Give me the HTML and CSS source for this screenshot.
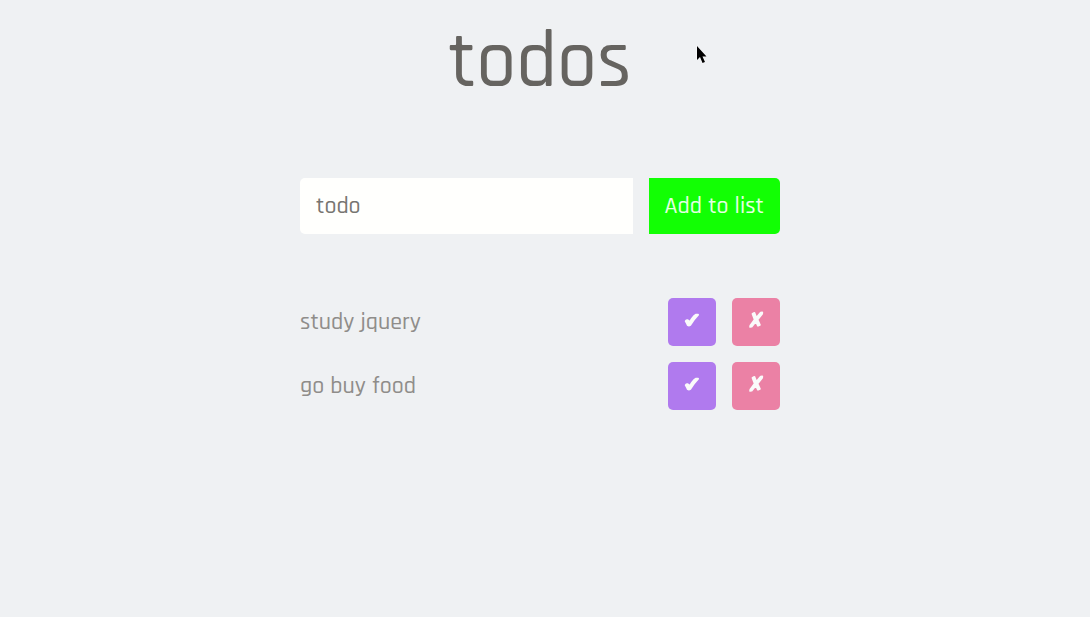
FILE: index.html
```html
<!DOCTYPE html>
<html lang="en">
<head>
<meta charset="utf-8">
<meta name="viewport" content="width=device-width, initial-scale=1">
<title>todos</title>
<link rel="stylesheet" href="styles.css">
</head>
<body>
<main class="app">
  <h1 class="title">todos</h1>
  <form class="entry">
    <input class="entry-input" type="text" placeholder="todo" aria-label="todo">
    <button class="entry-add" type="button">Add to list</button>
  </form>
  <ul class="list">
    <li class="item">
      <span class="item-text">study jquery</span>
      <button class="action done" type="button" aria-label="Complete study jquery"><svg class="icon" viewBox="0 0 24 24" aria-hidden="true"><path d="M5.8 13.2Q6.3 11.9 7.5 12.3Q8.8 12.8 9.6 14.6Q12.5 8.8 15.8 6.8H18Q14 10.8 10.2 17Q9 17.8 7.8 17.2Q6.9 15 5.8 13.2Z"/></svg></button>
      <button class="action remove" type="button" aria-label="Remove study jquery"><svg class="icon" viewBox="0 0 24 24" aria-hidden="true"><path d="M8.6 5.8L10.4 5L12.4 10L16.6 4.8L18.2 4.6L18 5.8L13.4 11.6L15.8 16.8L14 17.6L11.8 13.4L7.6 18.6L6.2 18.8L6.4 17.6L10.8 11.6Z"/></svg></button>
    </li>
    <li class="item">
      <span class="item-text">go buy food</span>
      <button class="action done" type="button" aria-label="Complete go buy food"><svg class="icon" viewBox="0 0 24 24" aria-hidden="true"><path d="M5.8 13.2Q6.3 11.9 7.5 12.3Q8.8 12.8 9.6 14.6Q12.5 8.8 15.8 6.8H18Q14 10.8 10.2 17Q9 17.8 7.8 17.2Q6.9 15 5.8 13.2Z"/></svg></button>
      <button class="action remove" type="button" aria-label="Remove go buy food"><svg class="icon" viewBox="0 0 24 24" aria-hidden="true"><path d="M8.6 5.8L10.4 5L12.4 10L16.6 4.8L18.2 4.6L18 5.8L13.4 11.6L15.8 16.8L14 17.6L11.8 13.4L7.6 18.6L6.2 18.8L6.4 17.6L10.8 11.6Z"/></svg></button>
    </li>
  </ul>
</main>
<svg class="pointer" viewBox="0 0 12 20" aria-hidden="true"><path d="M1 1V15L4 12L6.5 18L9 17L6.5 11.5H10.5Z"/></svg>
</body>
</html>
```
FILE: styles.css
```css
* {
  box-sizing: border-box;
}

body {
  margin: 0;
  padding-right: 10px;
  background: #eff1f3;
  color: #666460;
  font-family: Rajdhani, Roboto, sans-serif;
  font-size: 24px;
  font-weight: 500;
  line-height: 32px;
}

.app {
  max-width: 480px;
  margin: 0 auto;
}

.title {
  margin: 0 0 60px;
  padding-top: 8px;
  font-size: 80px;
  font-weight: 500;
  line-height: 110px;
  text-align: center;
}

.entry {
  display: flex;
  gap: 16px;
  margin-bottom: 64px;
}

.entry-input,
.entry-add {
  height: 56px;
  padding: 0 16px;
  border: 0;
  font: inherit;
}

.entry-input {
  flex: 1;
  min-width: 0;
  border-radius: 5px 0 0 5px;
  background: #fffffd;
  color: #666460;
  outline: none;
}

.entry-input::placeholder {
  color: #777571;
  opacity: 1;
}

.entry-add {
  border-radius: 0 5px 5px 0;
  background: #12ff04;
  color: #e4ffe2;
  white-space: nowrap;
}

.list {
  display: grid;
  gap: 16px;
  margin: 0;
  padding: 0;
  list-style: none;
}

.item {
  display: flex;
  align-items: center;
  gap: 16px;
}

.item-text {
  flex: 1;
  color: #8f8d8a;
}

.action {
  display: flex;
  justify-content: center;
  align-items: flex-start;
  width: 48px;
  height: 48px;
  padding: 10px 0 0;
  border: 0;
  border-radius: 5px;
  color: #fafafa;
}

.done {
  background: #b07aee;
}

.remove {
  background: #eb81a5;
}

.icon {
  width: 24px;
  height: 24px;
  fill: currentColor;
  stroke: currentColor;
  stroke-width: 2;
  stroke-linejoin: round;
}

.pointer {
  position: absolute;
  top: 45px;
  left: 696px;
  width: 12px;
  height: 20px;
  fill: #000;
  stroke: #fff;
  stroke-width: 1;
  paint-order: stroke;
}
```
